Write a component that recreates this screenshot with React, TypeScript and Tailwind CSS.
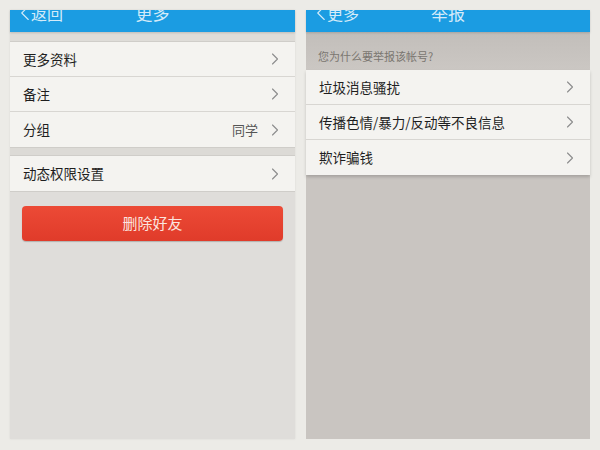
import { ChevronLeft, ChevronRight } from 'lucide-react'

const font = { fontFamily: '"Noto Sans CJK SC", "Noto Sans", sans-serif' }

function NavBar({ back, title }: { back: string; title: string }) {
  return (
    <div className="relative h-[22px] shrink-0 overflow-hidden bg-[#1b9ce2] shadow-[0_1px_2px_rgba(0,0,0,0.15)]">
      <div className="absolute -top-[10px] left-[2px] flex items-center text-[16px] leading-[22px] text-[#d4ebf9]">
        <ChevronLeft className="-mr-[7px] h-[26px] w-[26px]" strokeWidth={1} />
        <span>{back}</span>
      </div>
      <div className="absolute -top-[8px] left-0 right-0 text-center text-[17px] leading-[22px] text-[#d4ebf9]">
        {title}
      </div>
    </div>
  )
}

function Row({ label, value, last }: { label: string; value?: string; last?: boolean }) {
  return (
    <div
      className={`flex h-[35px] items-center justify-between bg-[#f4f3f0] pl-[13px] pr-[10px] ${
        last ? '' : 'border-b border-[#d8d6d2]'
      }`}
    >
      <span className="text-[13.5px] text-[#1e1e1e]">{label}</span>
      <span className="flex items-center gap-[7px]">
        {value && <span className="text-[13px] text-[#555]">{value}</span>}
        <ChevronRight className="h-[20px] w-[20px] text-[#8c8c8c]" strokeWidth={1.3} />
      </span>
    </div>
  )
}

export default function App() {
  return (
    <div className="flex h-[450px] w-[600px] gap-[11px] bg-[#ecebe7] pl-[10px] pt-[10px]" style={font}>
      {/* 更多 */}
      <div className="flex h-[429px] w-[285px] flex-col bg-[#dfddda] shadow-[0_0_2px_rgba(0,0,0,0.08)]">
        <NavBar back="返回" title="更多" />
        <div className="h-[9px] bg-[#dedcd8]" />
        <div className="border-t border-[#cfcdc9]">
          <Row label="更多资料" />
          <Row label="备注" />
          <Row label="分组" value="同学" last />
        </div>
        <div className="h-[8px] border-t border-[#cfcdc9] bg-[#dcdad6]" />
        <div className="border-y border-[#cfcdc9]">
          <Row label="动态权限设置" last />
        </div>
        <div className="px-[12px] pt-[14px]">
          <button className="flex h-[35px] w-full items-center justify-center rounded-[4px] bg-gradient-to-b from-[#ec4a36] to-[#e03b2a] text-[15px] text-[#fbe4df] shadow-[0_1px_1px_rgba(0,0,0,0.2)]">
            删除好友
          </button>
        </div>
      </div>

      {/* 举报 */}
      <div className="flex h-[429px] w-[284px] flex-col bg-[#c9c5c1]">
        <NavBar back="更多" title="举报" />
        <div className="flex h-[38px] items-end bg-gradient-to-b from-[#c2beba] to-[#cbc7c3] pb-[6px] pl-[12px] text-[11px] text-[#7a7670]">
          您为什么要举报该帐号?
        </div>
        <div className="shadow-[0_2px_3px_rgba(0,0,0,0.18)]">
          <Row label="垃圾消息骚扰" />
          <Row label="传播色情/暴力/反动等不良信息" />
          <Row label="欺诈骗钱" last />
        </div>
      </div>
    </div>
  )
}
